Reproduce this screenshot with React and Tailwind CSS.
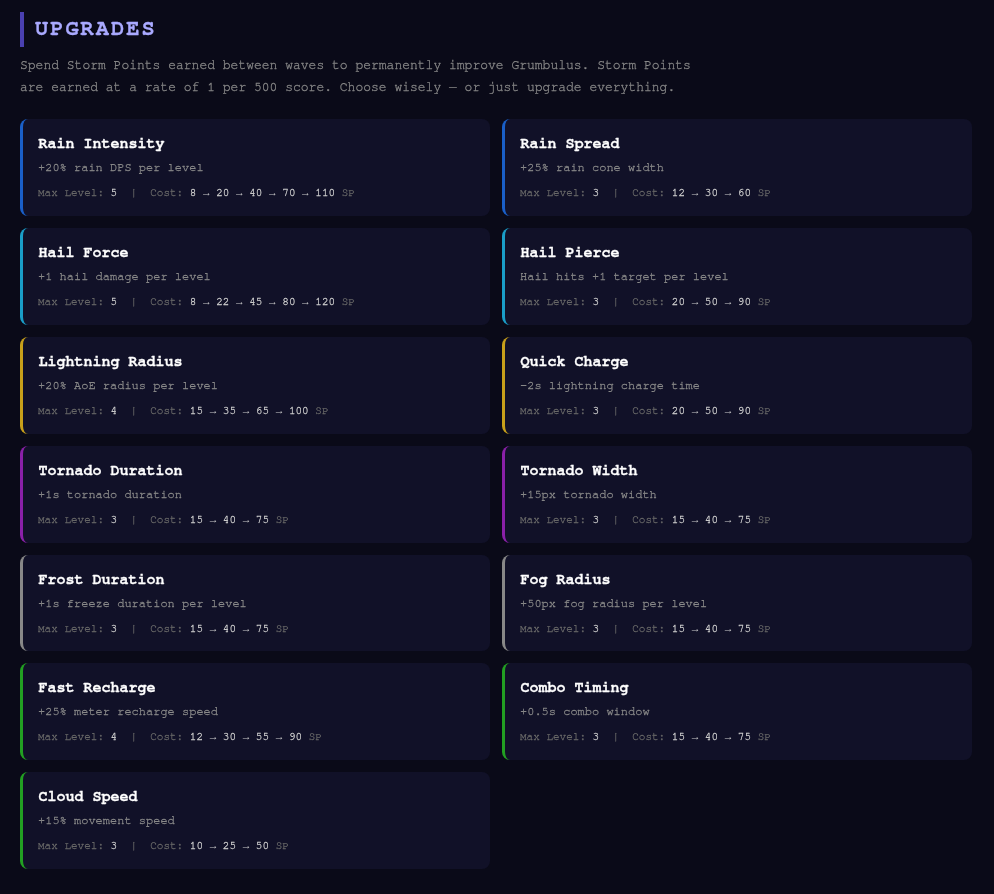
const rows = [
  ["Rain Intensity", "+20% rain DPS per level", "5", ["8", "20", "40", "70", "110"], "border-l-[#1a5fc8]"],
  ["Rain Spread", "+25% rain cone width", "3", ["12", "30", "60"], "border-l-[#1a5fc8]"],
  ["Hail Force", "+1 hail damage per level", "5", ["8", "22", "45", "80", "120"], "border-l-[#1a9ec8]"],
  ["Hail Pierce", "Hail hits +1 target per level", "3", ["20", "50", "90"], "border-l-[#1a9ec8]"],
  ["Lightning Radius", "+20% AoE radius per level", "4", ["15", "35", "65", "100"], "border-l-[#c8a01a]"],
  ["Quick Charge", "-2s lightning charge time", "3", ["20", "50", "90"], "border-l-[#c8a01a]"],
  ["Tornado Duration", "+1s tornado duration", "3", ["15", "40", "75"], "border-l-[#8a20a8]"],
  ["Tornado Width", "+15px tornado width", "3", ["15", "40", "75"], "border-l-[#8a20a8]"],
  ["Frost Duration", "+1s freeze duration per level", "3", ["15", "40", "75"], "border-l-[#888888]"],
  ["Fog Radius", "+50px fog radius per level", "3", ["15", "40", "75"], "border-l-[#888888]"],
  ["Fast Recharge", "+25% meter recharge speed", "4", ["12", "30", "55", "90"], "border-l-[#22a022]"],
  ["Combo Timing", "+0.5s combo window", "3", ["15", "40", "75"], "border-l-[#22a022]"],
  ["Cloud Speed", "+15% movement speed", "3", ["10", "25", "50"], "border-l-[#22a022]"],
];

export default function App() {
  return (
    <div className="min-h-[894px] bg-[#0a0a18] pt-3 pb-[25px] pl-5 font-['FreeMono','Liberation_Mono',monospace]">
      <div className="w-[952px] will-change-transform [-webkit-text-stroke:0.3px]">
        <h1 className="border-l-4 border-[#4a40b0] pl-[11px] pb-[2px] text-[22px] leading-[33px] font-bold tracking-[2px] text-[#aaaaff]">UPGRADES</h1>
        <p className="mt-2 mb-5 max-w-[680px] text-[13px] leading-[22.1px] text-[#888888]">
          Spend Storm Points earned between waves to permanently improve Grumbulus. Storm Points are earned at a rate of 1 per 500 score. Choose wisely — or just upgrade everything.
        </p>
        <div className="grid grid-cols-2 gap-3">
          {rows.map(([name, desc, lvl, cost, color]) => (
            <div key={name} className={`rounded-lg border-l-[3px] bg-[#111128] px-[15px] py-4 ${color}`}>
              <div className="mb-[5px] ml-[0.5px] text-[15px] leading-[18px] font-bold text-white">{name}</div>
              <div className="mb-[11px] text-[12px] leading-[18px] text-[#888888]">{desc}</div>
              <div className="text-[11px] leading-[12.83px] whitespace-pre text-[#666666]">
                Max Level: <span className="text-[#cccccc]">{lvl}</span>{"\u00a0 | \u00a0"}Cost: <span className="text-[#cccccc]">
                  {cost.map((c, i) => (
                    <span key={i}>
                      {i > 0 && <span className="font-['Liberation_Mono'] [-webkit-text-stroke:0]"> → </span>}
                      {c}
                    </span>
                  ))}
                </span> SP
              </div>
            </div>
          ))}
        </div>
      </div>
    </div>
  );
}
